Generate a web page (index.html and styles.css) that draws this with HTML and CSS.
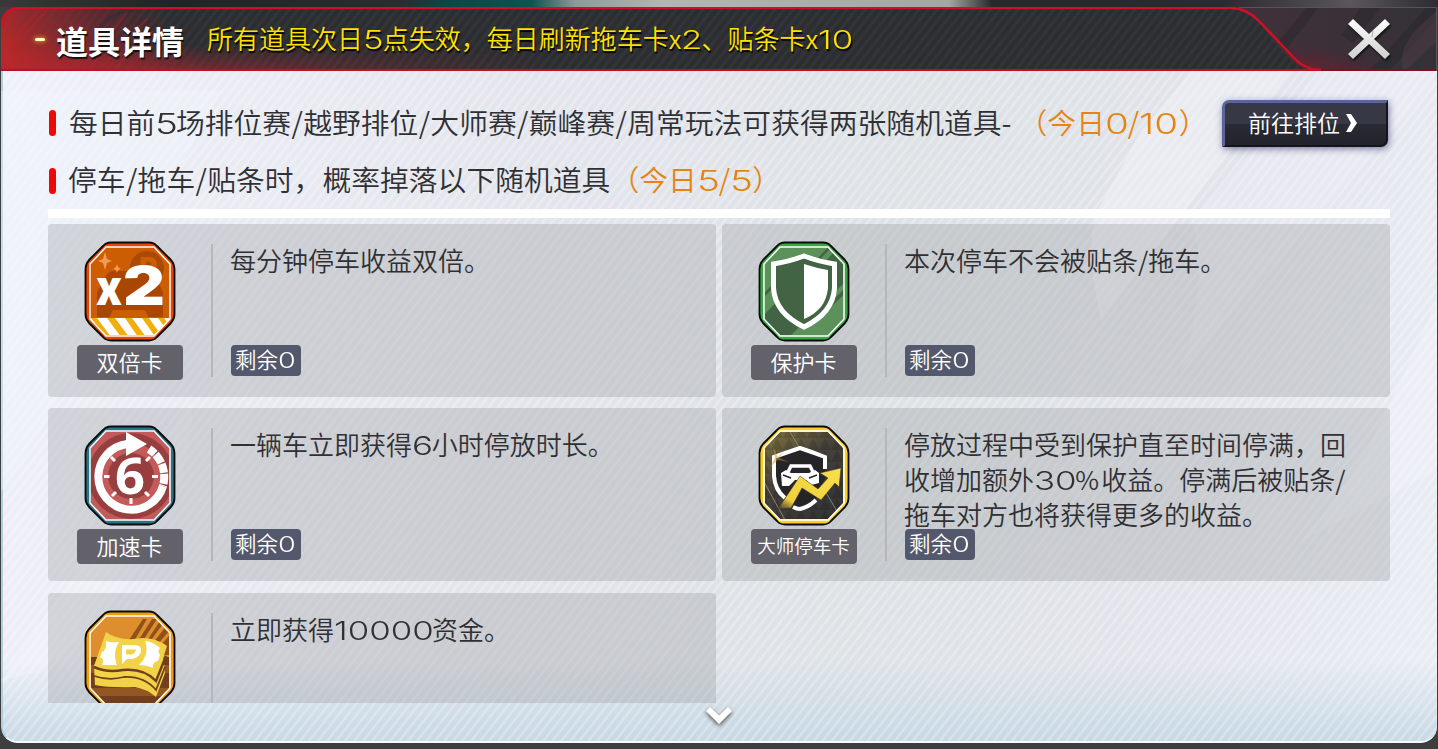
FILE: index.html
```html
<!DOCTYPE html>
<html lang="zh-CN">
<head>
    <meta charset="UTF-8">
    <title>道具详情</title>
    <link rel="stylesheet" href="styles.css">
</head>
<body>
    <div class="panel">
        <header class="header">
            <svg class="header-bg" width="1436" height="64" viewBox="0 0 1436 64">
                <defs>
                    <linearGradient id="redLeft" gradientUnits="userSpaceOnUse" x1="0" y1="64" x2="130" y2="-40">
                        <stop offset="0" stop-color="#c92a26"/>
                        <stop offset=".5" stop-color="#8d2930" stop-opacity=".75"/>
                        <stop offset="1" stop-color="#7b2028" stop-opacity="0"/>
                    </linearGradient>
                    <linearGradient id="redFloor" x1="0" y1="0" x2="1" y2="0">
                        <stop offset="0" stop-color="#b52630" stop-opacity=".8"/>
                        <stop offset="1" stop-color="#b52630" stop-opacity="0"/>
                    </linearGradient>
                    <linearGradient id="corner" x1="0" y1="0" x2="1" y2="0">
                        <stop offset="0" stop-color="#42303b"/>
                        <stop offset="1" stop-color="#343137"/>
                    </linearGradient>
                    <radialGradient id="cornerGlow" cx=".25" cy="1.1" r=".55">
                        <stop offset="0" stop-color="#b30f25" stop-opacity=".75"/>
                        <stop offset="1" stop-color="#5a1e2c" stop-opacity="0"/>
                    </radialGradient>
                    <pattern id="hatch" width="9" height="64" patternUnits="userSpaceOnUse" patternTransform="skewX(-38)">
                        <rect width="4" height="64" fill="#fff" opacity=".03"/>
                    </pattern>
                    <linearGradient id="fadeUp" x1="0" y1="0" x2="0" y2="1">
                        <stop offset=".6" stop-color="#000"/>
                        <stop offset="1" stop-color="#fff"/>
                    </linearGradient>
                    <mask id="floorMask"><rect width="620" height="64" fill="url(#fadeUp)"/></mask>
                </defs>
                <rect width="1436" height="64" fill="#2b2d31"/>
                <rect width="1436" height="64" fill="url(#hatch)"/>
                <rect width="320" height="64" fill="url(#redLeft)"/>
                <rect width="560" height="64" fill="url(#redFloor)" mask="url(#floorMask)"/>
                <g stroke="#c51d2a" fill="none" opacity=".5" stroke-width="1.3">
                    <path d="M8 44Q14 28 38 4M14 46Q24 24 46 4M70 64Q110 30 128 2M88 64Q96 50 112 32M98 64Q126 30 146 12M112 64Q132 40 152 24M126 64Q142 44 160 36M0 30Q8 14 20 4"/>
                </g>
                <path d="M96 24Q106 12 114 8Q122 3 142 1M150 44Q160 28 176 10" stroke="#2b2d31" stroke-width="4" fill="none" opacity=".5"/>
                <path d="M1230 0C1262 0 1280 64 1316 64L1436 64L1436 0Z" fill="url(#corner)"/>
                <path d="M1230 0C1262 0 1280 64 1316 64L1436 64L1436 0Z" fill="url(#cornerGlow)"/>
                <path d="M1278 34L1306 0H1318L1284 44ZM1368 64L1426 0H1436V12L1388 64ZM1340 28L1360 0H1380L1352 36Z" fill="#25262b" opacity=".4"/>
                <path d="M1402 64Q1396 40 1420 18L1436 4V34L1404 64Z" fill="#5b434d" opacity=".35"/>
                <path d="M0 63H1436" stroke="#bd1026" stroke-width="2"/>
                <path d="M1316 63H1436" stroke="#850d20" stroke-width="2"/>
                <path d="M1 20Q2 1 20 1H1230C1242 1 1250 6 1258 14L1294 52Q1305 63 1320 63" stroke="#d20f24" stroke-width="2.4" fill="none"/>
                <path d="M1238 .5H1435.5V64" stroke="#55545a" fill="none"/>
            </svg>
            <span class="dash"></span>
            <h1>道具详情</h1>
            <p class="subtitle">所有道具次日<span class="num d1">5</span>点失效，每日刷新拖车卡x<span class="num d1">2</span>、贴条卡x<span class="num d2">10</span></p>
            <svg class="close" width="46" height="44" viewBox="0 0 46 44">
                <defs>
                    <linearGradient id="steel" x1="0" y1="0" x2="0" y2="1">
                        <stop offset="0" stop-color="#fff"/>
                        <stop offset="1" stop-color="#cfcfcf"/>
                    </linearGradient>
                </defs>
                <path d="M2 7L7 2L23 17L39 2L44 7L28 22L44 37L39 42L23 27L7 42L2 37L18 22Z" fill="url(#steel)"/>
                <path d="M26 20L27 14" stroke="#aaa" stroke-width="1"/>
            </svg>
        </header>

        <main class="content">
            <svg class="shine" width="1436" height="672" viewBox="0 0 1436 672">
                <path d="M1140 60L1190 0H1290L1100 250Q1080 160 1102 130Z" fill="#f3f4fb" opacity=".45"/>
                <path d="M1436 10L1180 300Q1210 200 1190 150L1320 0H1436Z" fill="#f3f4fb" opacity=".25"/>
                <path d="M1436 230L1390 330Q1360 400 1300 470L1436 400Z" fill="#f3f4fb" opacity=".4"/>
                <path d="M0 20H220L40 360L0 420Z" fill="#f1f6fd" opacity=".35"/>
                <path d="M0 610L190 330Q200 420 90 560L40 600Z" fill="#f5f6fc" opacity=".35"/>
            </svg>
            <div class="row">
                <i class="tick"></i>
                <p class="rule">每日前<span class="num">5</span>场排位赛<b>/</b>越野排位<b>/</b>大师赛<b>/</b>巅峰赛<b>/</b>周常玩法可获得两张随机道具<span class="cut">-</span></p>
                <p class="today first">（今日<span class="num d1">0</span><b>/</b><span class="num d2">10</span>）</p>
                <button class="go"><span>前往排位</span><svg width="12" height="20" viewBox="0 0 12 20"><path d="M1 1H6L12 10L6 19H1L6 10Z" fill="#fff"/></svg></button>
            </div>
            <div class="row second">
                <i class="tick"></i>
                <p class="rule">停车<b>/</b>拖车<b>/</b>贴条时，概率掉落以下随机道具</p>
                <p class="today">（今日<span class="num d1">5</span><b>/</b><span class="num d1">5</span>）</p>
            </div>
            <div class="bar"></div>

            <div class="list">
                <div class="card">
                    <div class="item">
                        <svg class="icon" width="92" height="101" viewBox="-1 -1 92 101">
                            <defs>
                                <clipPath id="oct"><path d="M21 6H69L84 21V78L69 93H21L6 78V21Z"/></clipPath>
                            </defs>
                            <path class="edge" d="M26 .5H64Q69 .5 72 4L86 18Q89.500 22 89.500 27V72Q89.500 77 86 81L72 95Q69 98.500 64 98.500H26Q21 98.500 18 95L4 81Q.5 77 .5 72V27Q.5 22 4 18L18 4Q21 .5 26 .5Z" fill="#e84500"/>
                            <g clip-path="url(#oct)">
                                <rect width="90" height="99" fill="#cd5d02"/>
                                <circle cx="62" cy="26" r="17" fill="#aa4a08"/>
                                <text x="54" y="36" class="ic-p">P</text>
                                <path d="M12 50L22 32Q24 29 30 29H62Q68 29 70 34L78 50V75H12Z" fill="#a94702"/>
                                <path d="M28 68H60L64 76H24Z" fill="#cd5d02"/>
                                <rect y="76" width="90" height="20" fill="#fff"/>
                                <path d="M6 76H12L26 95H20ZM22 76H30L44 95H36ZM40 76H47L61 95H53ZM57 76H64L76 93H69ZM73 76H79L90 91H84Z" fill="#f2ae0c"/>
                            </g>
                            <path d="M20 10L22 17L27 19L22 21L20 28L18 21L13 19L18 17ZM32 22L33 25L36 27L33 28L32 31L31 28L28 27L31 25Z" fill="#f59b55"/>
                            <path class="ring" d="M21 5H69L85 22V77L69 94H21L5 77V22Z"/>
                            <text x="11" y="63" class="ic-x" textLength="26" lengthAdjust="spacingAndGlyphs">x</text>
                            <text x="38" y="63" class="ic-2" textLength="42" lengthAdjust="spacingAndGlyphs">2</text>
                        </svg>
                        <span class="name">双倍卡</span>
                    </div>
                    <div class="info">
                        <p>每分钟停车收益双倍。</p>
                        <span class="left">剩余<span class="num d1">0</span></span>
                    </div>
                </div>

                <div class="card">
                    <div class="item">
                        <svg class="icon" width="92" height="101" viewBox="-1 -1 92 101">
                            <path class="edge" d="M26 .5H64Q69 .5 72 4L86 18Q89.500 22 89.500 27V72Q89.500 77 86 81L72 95Q69 98.500 64 98.500H26Q21 98.500 18 95L4 81Q.5 77 .5 72V27Q.5 22 4 18L18 4Q21 .5 26 .5Z" fill="#3da545"/>
                            <g clip-path="url(#oct)">
                                <rect width="90" height="99" fill="#5c915b"/>
                                <path d="M6 72L74 0H90V36L26 99H6Z" fill="#426444"/>
                                <path d="M4 62L20 46V52L4 68ZM52 99L90 60V66L58 99ZM62 16L76 2L82 2L66 20Z" fill="#5c915b"/>
                                <path d="M64 68L90 42V48L60 76ZM4 52L16 40V44L4 56Z" fill="#426444"/>
                            </g>
                            <path class="ring" d="M21 5H69L85 22V77L69 94H21L5 77V22Z"/>
                            <path d="M45 14Q61 20 75.500 22V46Q74 71 45 85Q16 71 14.500 46V22Q29 20 45 14Z" fill="#426444" stroke="#fff" stroke-width="5"/>
                            <path d="M45 22Q57 26 69 28V46Q67 68 45 77Z" fill="#fff"/>
                        </svg>
                        <span class="name">保护卡</span>
                    </div>
                    <div class="info">
                        <p>本次停车不会被贴条/拖车。</p>
                        <span class="left">剩余<span class="num d1">0</span></span>
                    </div>
                </div>

                <div class="card">
                    <div class="item">
                        <svg class="icon" width="92" height="101" viewBox="-1 -1 92 101">
                            <path class="edge" d="M26 .5H64Q69 .5 72 4L86 18Q89.500 22 89.500 27V72Q89.500 77 86 81L72 95Q69 98.500 64 98.500H26Q21 98.500 18 95L4 81Q.5 77 .5 72V27Q.5 22 4 18L18 4Q21 .5 26 .5Z" fill="#2b7482"/>
                            <g clip-path="url(#oct)">
                                <rect width="90" height="99" fill="#c55a5a"/>
                                <circle cx="46" cy="50" r="43" fill="#973f3f"/>
                                <circle cx="46" cy="50" r="33" fill="#c55a5a"/>
                                <circle cx="46" cy="50" r="23" fill="#973f3f"/>
                            </g>
                            <path class="ring" d="M21 5H69L85 22V77L69 94H21L5 77V22Z"/>
                            <path d="M42 18A33 33 0 1 0 78 60" stroke="#fff" stroke-width="8" fill="none"/>
                            <path d="M64 23A33 33 0 0 1 78 60" stroke="#fff" stroke-width="8" fill="none" stroke-dasharray="7.500 1.200 10 1.200 9 1.200 10 1.200"/>
                            <path d="M41 6L62 18L41 30Z" fill="#fff"/>
                            <path d="M19 50.500H24.500M67 50.500H73M46 72V78M26 31L30 35M65 31L61 35M27 70L31 66M64 70L60 66" stroke="#fff" stroke-width="3"/>
                            <text x="30" y="68" class="ic-6" textLength="30" lengthAdjust="spacingAndGlyphs">6</text>
                        </svg>
                        <span class="name">加速卡</span>
                    </div>
                    <div class="info">
                        <p>一辆车立即获得<span class="num d1">6</span>小时停放时长。</p>
                        <span class="left">剩余<span class="num d1">0</span></span>
                    </div>
                </div>

                <div class="card">
                    <div class="item">
                        <svg class="icon" width="92" height="101" viewBox="-1 -1 92 101">
                            <defs>
                                <linearGradient id="olive" x1="0" y1="0" x2=".7" y2="1">
                                    <stop offset="0" stop-color="#8c7c42"/>
                                    <stop offset=".5" stop-color="#45413a"/>
                                    <stop offset="1" stop-color="#333336"/>
                                </linearGradient>
                                <linearGradient id="arrow" x1="0" y1="1" x2="1" y2="0">
                                    <stop offset="0" stop-color="#e0a82a" stop-opacity="0"/>
                                    <stop offset=".2" stop-color="#f0cf3c"/>
                                    <stop offset="1" stop-color="#f9e04c"/>
                                </linearGradient>
                                <pattern id="tri" width="12" height="12" patternUnits="userSpaceOnUse">
                                    <path d="M0 12L6 0L12 12Z" fill="#000" opacity=".13"/>
                                </pattern>
                            </defs>
                            <path class="edge" d="M26 .5H64Q69 .5 72 4L86 18Q89.500 22 89.500 27V72Q89.500 77 86 81L72 95Q69 98.500 64 98.500H26Q21 98.500 18 95L4 81Q.5 77 .5 72V27Q.5 22 4 18L18 4Q21 .5 26 .5Z" fill="#f8cf24"/>
                            <g clip-path="url(#oct)">
                                <rect width="90" height="99" fill="url(#olive)"/>
                                <rect width="90" height="99" fill="url(#tri)"/>
                                <path d="M30 4L82 92M4 54L26 94" stroke="#99958a" stroke-width=".8"/>
                            </g>
                            <path class="ring" d="M21 5H69L85 22V77L69 94H21L5 77V22Z"/>
                            <path d="M41 21Q53 26 66 31V50Q64 74 41 83Q17 73 15 50V31Q29 26 41 21Z" fill="#252528"/>
                            <path d="M66 43V31Q53 26 41 22Q29 26 15 31V50Q16 64 26 72M34 81Q38 83 41 83Q50 81 57 74" fill="none" stroke="#fff" stroke-width="4"/>
                            <path d="M29 46L32 40H51L54 46" stroke="#fff" stroke-width="3.500" fill="none"/>
                            <path d="M22 47L27 44L32 47H50L56 44L60 47V57L52 59L47 54H36L30 60H23Z" fill="#fff"/>
                            <path d="M24 49L32 52M50 52L58 49" stroke="#252528" stroke-width="1.500"/>
                            <path d="M19 83L41 50L59 63L69 52L61 47L82 42L80 61L76 57L62 74L43 62L32 82Z" fill="url(#arrow)" stroke="#3a3735" stroke-width=".5"/>
                            <path d="M14 21L19 31L25 25L20 32L30 36L19 34L12 40L16 32Z" fill="#c9972c" opacity=".5"/>
                        </svg>
                        <span class="name small">大师停车卡</span>
                    </div>
                    <div class="info">
                        <p>停放过程中受到保护直至时间停满，回<br>收增加额外<span class="num d2">30</span><span class="pct">%</span>收益。停满后被贴条/<br>拖车对方也将获得更多的收益。</p>
                        <span class="left">剩余<span class="num d1">0</span></span>
                    </div>
                </div>

                <div class="card">
                    <div class="item">
                        <svg class="icon" width="92" height="101" viewBox="-1 -1 92 101">
                            <path class="edge" d="M26 .5H64Q69 .5 72 4L86 18Q89.500 22 89.500 27V72Q89.500 77 86 81L72 95Q69 98.500 64 98.500H26Q21 98.500 18 95L4 81Q.5 77 .5 72V27Q.5 22 4 18L18 4Q21 .5 26 .5Z" fill="#f39a0e"/>
                            <g clip-path="url(#oct)">
                                <rect width="90" height="47" fill="#de8d2f"/>
                                <rect y="46" width="90" height="53" fill="#713f1d"/>
                                <path d="M0 54H90V62H0ZM0 77H90V85H0Z" fill="#935723"/>
                                <path d="M42 32L58 8L62 8L49 30H53L67 8L72 8L57 31H61L75 10L80 10L64 32H68L82 14L86 18L72 34H76L88 20V44H42Z" fill="#8f5318"/>
                            </g>
                            <path class="ring" d="M21 5H69L85 22V77L69 94H21L5 77V22Z"/>
                            <path d="M9 55L12 48L78 43L80 62L71 86Q62 78 50 76Q25 77 10 74Z" fill="#f2d247"/>
                            <path d="M9 65Q24 70 39 66Q59 65 71 79L80 56" fill="none" stroke="#713f1d" stroke-width="1.800"/>
                            <path d="M9 55L21 21Q34 31 58 27Q71 27 82 35L71 69Q58 55 35 58Q20 61 9 55Z" fill="#f2d247"/>
                            <path d="M9 56Q22 62 38 59Q59 57 71 70L81 45" fill="none" stroke="#713f1d" stroke-width="2.500"/>
                            <path d="M21 30Q26 32 34 31Q27 42 32 54L17 54Q20 48 15 46L17 41Q22 39 21 30ZM60 30Q67 30 75 37Q72 40 75 44L73 50Q67 51 68 57Q62 54 54 54Q65 43 60 30Z" fill="#fff"/>
                            <path d="M37 34H50Q57 34 56 41Q53 48 46 48H42L37 53ZM41 38.500V43.500H46Q50 43 51 38.500Z" fill="#fff" fill-rule="evenodd"/>
                        </svg>
                        <span class="name">资金卡</span>
                    </div>
                    <div class="info">
                        <p>立即获得<span class="num d5">10000</span>资金。</p>
                        <span class="left">剩余<span class="num d1">0</span></span>
                    </div>
                </div>
            </div>
            <svg class="more" width="32" height="26" viewBox="0 0 32 26">
                <path d="M3 8L7 4L16 12.500L25 4L29 8L16 21Z" fill="#fff"/>
            </svg>
        </main>
    </div>
</body>
</html>
```
FILE: styles.css
```css
* {
    box-sizing: border-box;
    margin: 0;
    padding: 0;
}
body {
    width: 1438px;
    height: 749px;
    overflow: hidden;
    padding: 7px 1px 0;
    font-family: "Noto Sans CJK SC", sans-serif;
    font-weight: 350;
    color: #303034;
    background: linear-gradient(90deg, #3a3838 0, #222326 12%, #2a2c30 28%, #0b4644 31%, #0d5450 37%, #8e9998 40%, #b5b5b5 46%, #a5a5a5 66%, #28272b 69%, #2b2a30 85%, #5a5659 94%, #2c2b31 100%) 0 0 / 100% 7px no-repeat, #3e3e3e;
}
p, h1 {
    white-space: nowrap;
}
b, i {
    font-weight: inherit;
}

/* wide digits */
.num {
    display: inline-block;
    font-family: Inter, sans-serif;
    font-weight: 300;
    line-height: 1;
    transform: scaleX(1.34);
    transform-origin: left;
}
.d1 { margin-right: .16em; }
.d2 { margin-right: .36em; }
.d5 { margin-right: .9em; }

.panel {
    height: 736px;
    border-radius: 16px 0 16px 16px;
    overflow: hidden;
}

/* header */
.header {
    position: relative;
    display: flex;
    align-items: center;
    height: 64px;
    padding-left: 34px;
}
.header-bg {
    position: absolute;
    left: 0;
    top: 0;
}
.header > :not(.header-bg) {
    position: relative;
}
.dash {
    width: 10px;
    height: 3px;
    border-radius: 2px;
    background: #fffbd8;
    box-shadow: 0 0 4px 1px #d68a18;
}
h1 {
    margin: 2px 0 0 11px;
    font-size: 32px;
    line-height: 40px;
    font-weight: 700;
    color: #fff;
    text-shadow: 1px 2px 1px #111;
}
.subtitle {
    margin: 0 0 3px 23px;
    font-size: 26px;
    line-height: 40px;
    color: #ffe100;
    text-shadow: 1px 2px 1px #000;
}
.close {
    margin: 0 45px 0 auto;
    filter: drop-shadow(1px 2px 1px #111);
}

/* body */
.content {
    position: relative;
    height: 672px;
    padding: 23px 47px 0 45px;
    border-left: 2px solid #b3cedb;
    border-bottom: 2px solid #f4f9fc;
    border-radius: 0 0 16px 16px;
    background:
        repeating-linear-gradient(128deg, rgba(255, 255, 255, .28) 0 1px, transparent 2.500px 5.600px, rgba(255, 255, 255, .28) 7.100px),
        linear-gradient(transparent 590px, rgba(198, 216, 228, .9) 665px),
        linear-gradient(100deg, #eef1f9, #e3e5ec 35%, #dde2e6 60%, #e1e4ea 80%, #e9edf4);
}
.shine {
    position: absolute;
    left: -2px;
    top: 0;
}
.content > :not(.shine) {
    position: relative;
}
.row {
    display: flex;
    align-items: center;
    height: 58px;
    font-size: 28.800px;
}
.second {
    height: 57px;
}
.tick {
    width: 7px;
    height: 26px;
    margin: 0 13px 0 1px;
    border-radius: 4px;
    background: #ee0808;
}
.second .tick {
    margin-right: 12px;
}
.rule, .today {
    padding-bottom: 4px;
}
.rule b, .today b {
    display: inline-block;
    width: 12px;
    text-align: center;
}
.rule .num {
    margin-right: .12em;
}
.cut {
    display: inline-block;
    width: 7px;
}
.today {
    color: #e58410;
}
.first {
    margin-left: 10px;
}
.go {
    display: flex;
    align-items: center;
    justify-content: center;
    gap: 5px;
    width: 166px;
    height: 47px;
    margin: 0 2px 0 auto;
    padding-right: 6px;
    border: solid #14141a;
    border-width: 3px 2px 2px 3px;
    border-top-color: #5b659b;
    border-left-color: #5b659b;
    border-radius: 7px 0 7px 0;
    background: linear-gradient(#373846 50%, #292a33 50%, #23232c);
    box-shadow: 1px 2px 7px rgba(50, 50, 110, .6);
    color: #fff;
    font: 350 23px/30px "Noto Sans CJK SC", sans-serif;
}
.go span {
    padding-bottom: 4px;
}
.go svg {
    margin-bottom: 2px;
}
.bar {
    height: 9px;
    background: #fff;
}

/* item cards */
.list {
    display: grid;
    grid-template-columns: 668px 668px;
    grid-auto-rows: 173px;
    gap: 11.400px 6px;
    height: 479px;
    margin-top: 6px;
    overflow: hidden;
}
.card {
    display: flex;
    border-radius: 4px;
    background: rgba(155, 157, 160, .35);
}
.item {
    display: flex;
    flex-direction: column;
    align-items: center;
    width: 163px;
    padding-top: 17px;
}
.name {
    width: 106px;
    height: 35px;
    margin-top: 3px;
    border-radius: 4px;
    background: #63626b;
    color: #fff;
    font-size: 22px;
    line-height: 32px;
    text-align: center;
}
.small {
    font-size: 18.500px;
}
.info {
    position: relative;
    height: 133px;
    margin-top: 20px;
    padding-left: 17px;
    border-left: 2px solid #b5b7bb;
}
.info p {
    margin-top: -2px;
    font-size: 26px;
    line-height: 35px;
}
.pct {
    display: inline-block;
    width: 26px;
}
.left {
    position: absolute;
    left: 18px;
    bottom: 1px;
    width: 70px;
    height: 31px;
    padding-left: 4px;
    border-radius: 4px;
    background: #54586c;
    color: #fff;
    font-size: 21.500px;
    line-height: 28px;
    white-space: nowrap;
}
.more {
    display: block;
    margin: 0 auto;
    filter: drop-shadow(0 2px 2px #555);
}

/* icons */
.edge {
    stroke: #0a0a0a;
    stroke-width: 1.800;
    stroke-linejoin: round;
}
.ring {
    fill: none;
    stroke: #fff;
    stroke-width: 1.500;
}
.icon text {
    font-family: Inter, sans-serif;
    font-weight: 900;
    fill: #fff;
}
.icon .ic-x { font-size: 50px; }
.icon .ic-2 { font-size: 53px; }
.icon .ic-6 { font-size: 50px; font-weight: 700; font-family: "Noto Sans", sans-serif; }
.icon .ic-p { font-size: 28px; fill: #cd5d02; }
```
